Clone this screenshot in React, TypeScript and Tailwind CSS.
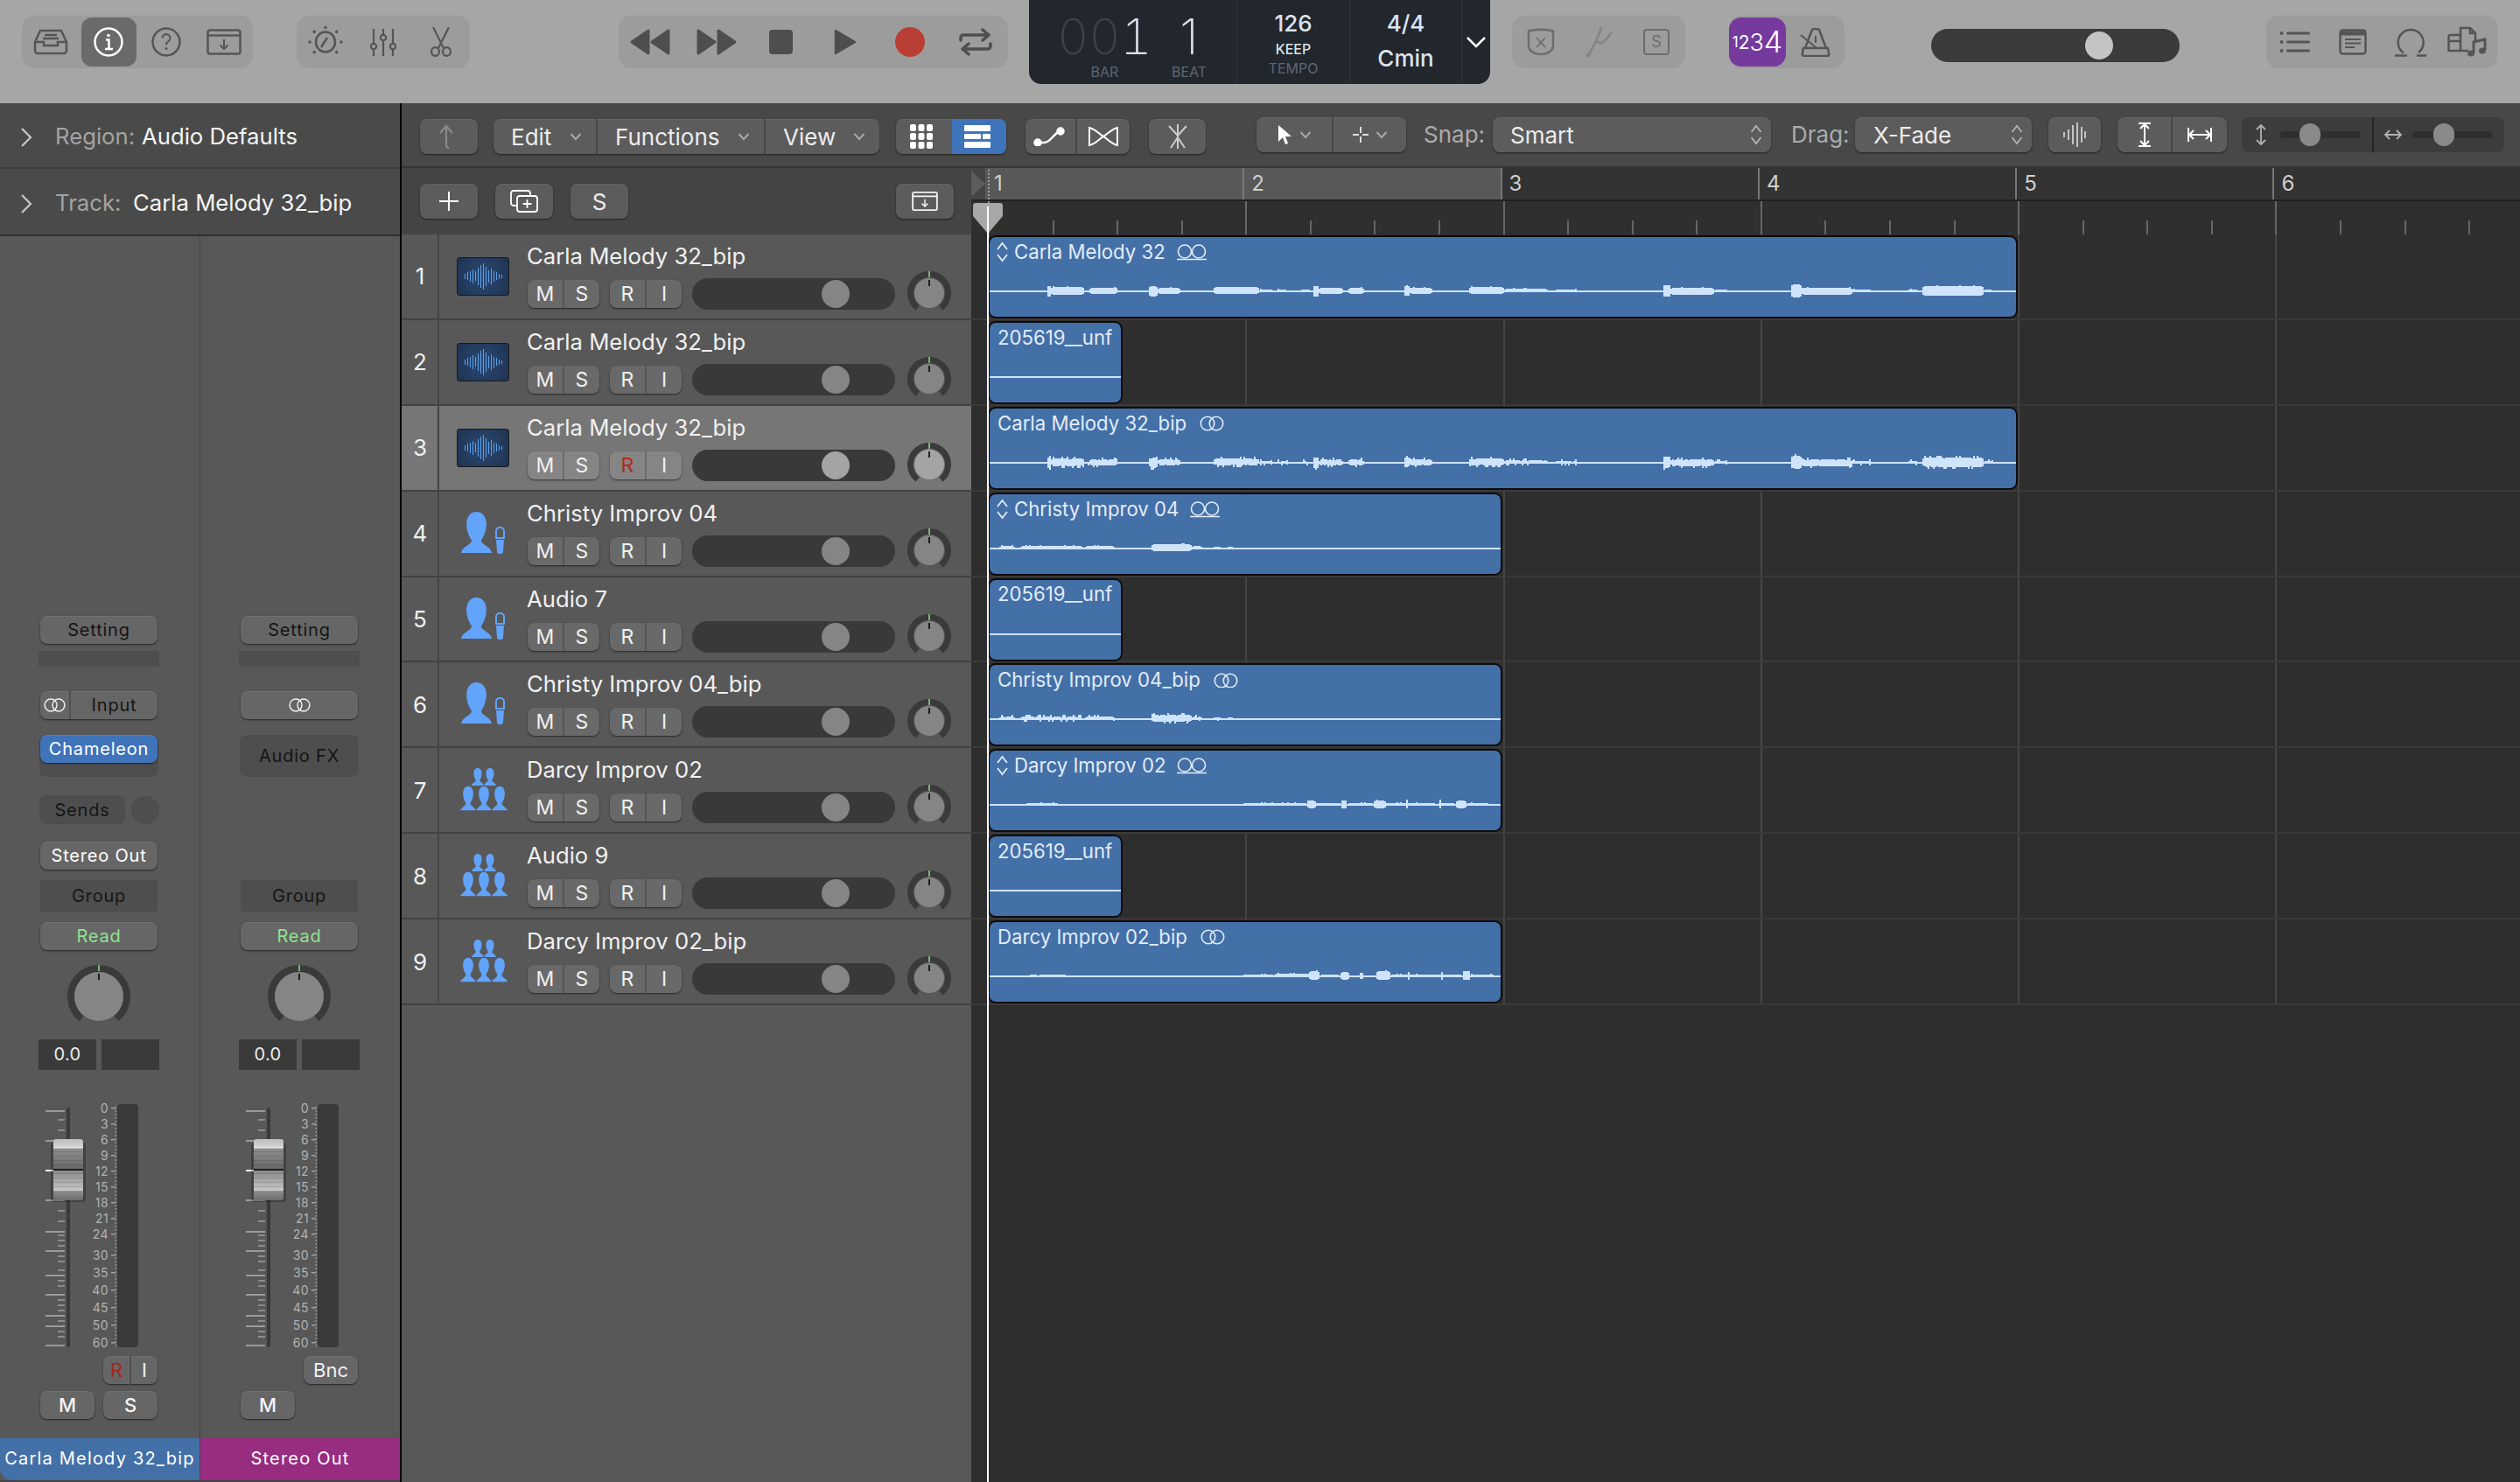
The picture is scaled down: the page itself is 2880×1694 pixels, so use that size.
import type { ReactNode } from 'react'

const btnBase =
  'flex items-center rounded-lg bg-[#5c5c5c] text-[#ececec] shadow-[0_1px_2px_rgba(0,0,0,0.55),inset_0_1px_0_rgba(255,255,255,0.06)]'
const btn = `${btnBase} justify-center`
const stripBase =
  'flex items-center justify-center rounded-lg shadow-[0_1px_2px_rgba(0,0,0,0.6),inset_0_1px_0_rgba(255,255,255,0.08)]'
const stripBtn = `${stripBase} bg-[#666666]`

const TOP = '#555555'
const BLUE = '#62a3fb'
const WAVE = '#cfe3fb'

function Cell({ w = 'w-[66px]', children }: { w?: string; children: ReactNode }) {
  return <div className={`flex h-full items-center justify-center ${w}`}>{children}</div>
}

function Group({ className, children }: { className: string; children: ReactNode }) {
  return <div className={`mt-[18px] flex h-[60px] rounded-[14px] bg-[#9c9c9c] ${className}`}>{children}</div>
}

function InboxIcon() {
  return (
    <svg width="40" height="30" viewBox="0 0 40 30" fill="none" stroke={TOP} strokeWidth="2.5">
      <path d="M2 15 8 2h24l6 13v10a3 3 0 0 1-3 3H5a3 3 0 0 1-3-3Z" />
      <path d="M2 15h10v4h16v-4h10M13 7h14M11 11h18" />
    </svg>
  )
}
function InfoIcon() {
  return (
    <svg width="36" height="36" viewBox="0 0 36 36" fill="none" stroke="#fff" strokeWidth="2.5">
      <circle cx="18" cy="18" r="15.5" />
      <circle cx="18" cy="10.5" r="1.8" fill="#fff" stroke="none" />
      <path d="M15 15.5h3.5V26M14 26h9" />
    </svg>
  )
}
function HelpIcon() {
  return (
    <svg width="36" height="36" viewBox="0 0 36 36" fill="none" stroke={TOP} strokeWidth="2.5">
      <circle cx="18" cy="18" r="15.5" />
      <path d="M13.5 13.5a4.5 4.5 0 1 1 6.8 3.9c-1.6 1-2.3 2-2.3 4" strokeWidth="2" />
      <circle cx="18" cy="25.5" r="1.5" fill={TOP} stroke="none" />
    </svg>
  )
}
function DownloadBox({ color = TOP, w = 40, h = 30 }: { color?: string; w?: number; h?: number }) {
  return (
    <svg width={w} height={h} viewBox="0 0 40 30" fill="none" stroke={color} strokeWidth="2.5">
      <rect x="1.5" y="1.5" width="37" height="27" rx="2.5" />
      <path d="M1.5 7.5h37" />
      <path d="M20 12v11M15.5 18.5 20 23l4.5-4.5" strokeWidth="2" />
    </svg>
  )
}
function DialIcon() {
  const dots = [0, 45, 90, 135, 225, 270, 315].map((a) => {
    const r = (a * Math.PI) / 180
    return { x: 20 + 18 * Math.sin(r), y: 19 - 16.5 * Math.cos(r) }
  })
  return (
    <svg width="40" height="38" viewBox="0 0 40 38" fill="none" stroke={TOP} strokeWidth="2.5">
      <ellipse cx="20" cy="19" rx="11" ry="11.5" />
      <path d="m15 25 7-11" />
      {dots.map((d, i) => (
        <circle key={i} cx={d.x} cy={d.y} r="1.8" fill={TOP} stroke="none" />
      ))}
    </svg>
  )
}
function SlidersIcon() {
  return (
    <svg width="30" height="32" viewBox="0 0 30 32" fill="none" stroke={TOP} strokeWidth="2.2">
      <path d="M4 1v31M15 1v31M26 1v31" />
      <circle cx="4" cy="21" r="3.2" fill="#9c9c9c" />
      <circle cx="15" cy="11" r="3.2" fill="#9c9c9c" />
      <circle cx="26" cy="21" r="3.2" fill="#9c9c9c" />
    </svg>
  )
}
function ScissorsIcon() {
  return (
    <svg width="26" height="34" viewBox="0 0 26 34" fill="none" stroke={TOP} strokeWidth="2.2">
      <path d="M4 0 16 24M22 0 10 24" />
      <ellipse cx="6.5" cy="28" rx="4.5" ry="4.8" />
      <ellipse cx="19.5" cy="28" rx="4.5" ry="4.8" />
    </svg>
  )
}
function RewIcon({ flip }: { flip?: boolean }) {
  return (
    <svg width="48" height="30" viewBox="0 0 48 30" className={flip ? '-scale-x-100' : ''} fill="#4e4e4e" stroke="#4e4e4e" strokeWidth="3" strokeLinejoin="round">
      <path d="M2 15 21 2v26ZM25 15 44 2v26Z" />
    </svg>
  )
}
function LoopIcon() {
  return (
    <svg width="38" height="32" viewBox="0 0 38 32" fill="none" stroke="#4e4e4e" strokeWidth="3.5" strokeLinecap="round" strokeLinejoin="round">
      <path d="M2 14v-3a3 3 0 0 1 3-3h28M27 2l7 6-7 6" />
      <path d="M36 18v3a3 3 0 0 1-3 3H5M11 18l-7 6 7 6" />
    </svg>
  )
}
function ShieldX() {
  return (
    <svg width="32" height="32" viewBox="0 0 32 32" fill="none" stroke="#6c6c6c" strokeWidth="2.5">
      <path d="M2 3.5c8-2.5 20-2.5 28 0V20c0 6-6 10-14 10S2 26 2 20Z" />
      <path d="m11 11 10 11M21 11 11 22" strokeWidth="1.8" />
    </svg>
  )
}
function ForkIcon() {
  return (
    <svg width="36" height="36" viewBox="0 0 36 36" fill="none" stroke="#858585" strokeWidth="2.8" strokeLinecap="round">
      <path d="M7 32 15 17M15 17l6-15M15 17c6 4 9 2 17-9" />
      <circle cx="6" cy="33" r="2.5" fill="#858585" stroke="none" />
    </svg>
  )
}
function BoxS() {
  return (
    <div className="flex h-[30px] w-[30px] items-center justify-center rounded-[4px] border-[2.5px] border-[#6c6c6c] text-[18px] leading-none text-[#6c6c6c]">
      S
    </div>
  )
}
function MetronomeIcon() {
  return (
    <svg width="36" height="34" viewBox="0 0 36 34" fill="none" stroke={TOP} strokeWidth="2.5" strokeLinejoin="round">
      <path d="M6 24 14 3c.5-1.5 7-1.5 8 0l8 21" />
      <path d="M4 24h28l1 6a2 2 0 0 1-2 3H5a2 2 0 0 1-2-3Z" />
      <path d="M1 9 19 24M18 10v8" strokeWidth="2" />
    </svg>
  )
}
function ListIcon() {
  return (
    <svg width="36" height="26" viewBox="0 0 36 26" fill={TOP}>
      <circle cx="2.5" cy="3" r="2" />
      <circle cx="2.5" cy="13" r="2" />
      <circle cx="2.5" cy="23" r="2" />
      <rect x="8" y="1.5" width="27" height="3" rx="1.5" />
      <rect x="8" y="11.5" width="27" height="3" rx="1.5" />
      <rect x="8" y="21.5" width="27" height="3" rx="1.5" />
    </svg>
  )
}
function NotesIcon() {
  return (
    <svg width="32" height="30" viewBox="0 0 32 30" fill="none" stroke={TOP} strokeWidth="2.5">
      <rect x="1.5" y="1.5" width="29" height="27" rx="3" />
      <path d="M2 5h28" strokeWidth="5" />
      <path d="M7 12h18M7 16.5h18M7 21h11" strokeWidth="2" />
    </svg>
  )
}
function LoopBrowserIcon() {
  return (
    <svg width="40" height="34" viewBox="0 0 40 34" fill="none" stroke={TOP} strokeWidth="2.5">
      <path d="M12 29.5A14.5 14.5 0 1 1 29 29" />
      <path d="M2 32.5h14M27 32.5h11" />
    </svg>
  )
}
function MediaIcon() {
  return (
    <svg width="48" height="36" viewBox="0 0 48 36" fill="none" stroke={TOP} strokeWidth="2.5">
      <path d="M1.5 28V12a2 2 0 0 1 2-2H15v18ZM1.5 17H15" />
      <path d="M15 14V2h11l6 6v8M26 2v6h6M15 28h9" />
      <path d="M30 30V18l13-3v12" strokeWidth="3" />
      <ellipse cx="27" cy="31" rx="4" ry="3.5" fill={TOP} stroke="none" />
      <ellipse cx="40" cy="28" rx="4" ry="3.5" fill={TOP} stroke="none" />
    </svg>
  )
}

function Lcd() {
  return (
    <div className="ml-[24px] flex h-[96px] w-[527px] rounded-b-[14px] bg-[#22262d] text-[#dbe3ee]">
      <div className="flex w-[238px] border-r border-[#30343c] pl-[36px]">
        <div className="flex w-[101px] flex-col items-center">
          <div className="mt-[8px] h-[68px] text-[56px] leading-[68px] font-extralight tabular-nums">
            <span className="text-[#3c424c]">00</span>1
          </div>
          <div className="text-[16px] leading-[12px] text-[#5e6672]">BAR</div>
        </div>
        <div className="ml-[22px] flex w-[48px] flex-col items-center">
          <div className="mt-[8px] h-[68px] text-[56px] leading-[68px] font-extralight">1</div>
          <div className="text-[16px] leading-[12px] text-[#5e6672]">BEAT</div>
        </div>
      </div>
      <div className="flex w-[129px] flex-col items-center border-r border-[#30343c]">
        <div className="mt-[12px] h-[30px] text-[26px] leading-[30px] font-medium">126</div>
        <div className="mt-[5px] h-[18px] text-[16px] leading-[18px] font-medium">KEEP</div>
        <div className="mt-[3px] text-[16px] leading-[20px] text-[#5e6672]">TEMPO</div>
      </div>
      <div className="flex w-[128px] flex-col items-center border-r border-[#30343c]">
        <div className="mt-[12px] h-[30px] text-[26px] leading-[30px] font-medium">4/4</div>
        <div className="mt-[10px] text-[26px] leading-[30px] font-medium">Cmin</div>
      </div>
      <div className="flex flex-1 items-center justify-center">
        <svg width="24" height="14" viewBox="0 0 24 14" fill="none" stroke="#fff" strokeWidth="2.5">
          <path d="m2 2 10 10L22 2" />
        </svg>
      </div>
    </div>
  )
}

function TopBar() {
  return (
    <div className="flex h-[118px] items-start bg-[#a6a6a6]">
      <Group className="ml-[25px]">
        <Cell><InboxIcon /></Cell>
        <Cell>
          <div className="flex h-[56px] w-[63px] items-center justify-center rounded-[12px] bg-[#6a6a6a]">
            <InfoIcon />
          </div>
        </Cell>
        <Cell><HelpIcon /></Cell>
        <Cell><DownloadBox /></Cell>
      </Group>
      <Group className="ml-[50px]">
        <Cell><DialIcon /></Cell>
        <Cell><SlidersIcon /></Cell>
        <Cell><ScissorsIcon /></Cell>
      </Group>
      <Group className="ml-[170px]">
        <Cell w="w-[74px]"><RewIcon /></Cell>
        <Cell w="w-[74px]"><RewIcon flip /></Cell>
        <Cell w="w-[74px]"><div className="h-[28px] w-[27px] rounded-[4px] bg-[#4e4e4e]" /></Cell>
        <Cell w="w-[74px]">
          <svg width="26" height="30" viewBox="0 0 26 30" fill="#4e4e4e" stroke="#4e4e4e" strokeWidth="2.5" strokeLinejoin="round">
            <path d="M2 2 24 15 2 28Z" />
          </svg>
        </Cell>
        <Cell w="w-[74px]"><div className="h-[34px] w-[34px] rounded-full bg-[#b93e33]" /></Cell>
        <Cell w="w-[75px]"><LoopIcon /></Cell>
      </Group>
      <Lcd />
      <Group className="ml-[25px]">
        <Cell><ShieldX /></Cell>
        <Cell><ForkIcon /></Cell>
        <Cell><BoxS /></Cell>
      </Group>
      <Group className="ml-[50px]">
        <div className="mt-[2px] flex h-[56px] w-[65px] items-center justify-center rounded-[14px] bg-[#763a9f] leading-none text-white">
          <span className="text-[17px]">1</span>
          <span className="text-[21px]">2</span>
          <span className="text-[27px] font-light">3</span>
          <span className="text-[34px] font-light">4</span>
        </div>
        <Cell w="w-[67px]"><MetronomeIcon /></Cell>
      </Group>
      <div className="mt-[33px] ml-[99px] flex h-[38px] w-[284px] items-center rounded-[19px] bg-[#3b3b3b] pl-[176px]">
        <div className="h-[32px] w-[32px] rounded-full bg-[#c4c4c4]" />
      </div>
      <Group className="ml-[99px]">
        <Cell><ListIcon /></Cell>
        <Cell><NotesIcon /></Cell>
        <Cell><LoopBrowserIcon /></Cell>
        <Cell><MediaIcon /></Cell>
      </Group>
    </div>
  )
}

function Chev({ color = '#a8a8a8' }: { color?: string }) {
  return (
    <svg width="14" height="10" viewBox="0 0 14 10" fill="none" stroke={color} strokeWidth="2">
      <path d="m1.5 2 5.5 6 5.5-6" />
    </svg>
  )
}
function UpDown({ color = '#b4b4b4', w = 14, h = 24 }: { color?: string; w?: number; h?: number }) {
  return (
    <svg width={w} height={h} viewBox="0 0 14 24" fill="none" stroke={color} strokeWidth="1.8">
      <path d="m1.5 9 5.5-7 5.5 7M1.5 15l5.5 7 5.5-7" />
    </svg>
  )
}
function Menu({ w, label, last }: { w: string; label: string; last?: boolean }) {
  return (
    <div className={`flex h-full items-center justify-between pr-[16px] pl-[20px] ${w} ${last ? '' : 'border-r-2 border-[#484848]'}`}>
      <span>{label}</span>
      <Chev />
    </div>
  )
}
function Divided({ left, right, lw, className }: { left: ReactNode; right: ReactNode; lw: string; className: string }) {
  return (
    <div className={`${btn} h-[40px] ${className}`}>
      <div className={`flex h-full items-center justify-center border-r-2 border-[#484848] ${lw}`}>{left}</div>
      <div className="flex h-full flex-1 items-center justify-center">{right}</div>
    </div>
  )
}
function SmallSlider({ pos, icon }: { pos: string; icon: ReactNode }) {
  return (
    <div className="flex h-full flex-1 items-center">
      <div className="flex w-[44px] justify-center">{icon}</div>
      <div className="flex h-[8px] w-[92px] items-center rounded-[4px] bg-[#2f2f2f]">
        <div className={`h-[26px] w-[24px] rounded-full bg-[#8a8a8a] ${pos}`} />
      </div>
    </div>
  )
}

function Toolbar() {
  const white = { fill: 'none', stroke: '#fff', strokeWidth: 2 }
  return (
    <div className="flex h-[74px] shrink-0 items-start border-b-2 border-[#363636] bg-[#484848] text-[26px] text-[#ececec]">
      <div className={`${btn} mt-[18px] ml-[21px] h-[40px] w-[66px]`}>
        <svg width="24" height="28" viewBox="0 0 24 28" fill="none" stroke="#8a8a8a" strokeWidth="2.2">
          <path d="M12 27c-2 0-3-1-3-3V3M2 10l7-8 7 8" />
        </svg>
      </div>
      <div className={`${btnBase} mt-[18px] ml-[18px] h-[40px] w-[441px]`}>
        <Menu w="w-[119px]" label="Edit" />
        <Menu w="w-[192px]" label="Functions" />
        <Menu w="w-[130px]" label="View" last />
      </div>
      <div className={`${btn} mt-[18px] ml-[19px] h-[40px] w-[126px] overflow-hidden`}>
        <div className="flex h-full w-[64px] items-center justify-center pr-[6px]">
          <svg width="26" height="28" viewBox="0 0 26 28" fill="#fff">
            {[0, 10, 20].flatMap((y) =>
              [0, 9.5, 19].map((x) => <rect key={`${x}-${y}`} x={x} y={y} width="7" height="8" rx="2" />),
            )}
          </svg>
        </div>
        <div className="flex h-full flex-1 items-center justify-center bg-[#3f74bb] pr-[4px]">
          <svg width="30" height="28" viewBox="0 0 30 28" fill="#fff">
            <rect x="0" y="1" width="30" height="7" rx="1" />
            <rect x="0" y="11" width="19" height="6" rx="1" />
            <rect x="21" y="11" width="9" height="6" rx="1" />
            <rect x="0" y="20" width="30" height="7" rx="1" />
          </svg>
        </div>
      </div>
      <Divided
        lw="w-[59px]"
        className="mt-[18px] ml-[22px] w-[119px]"
        left={
          <svg width="36" height="22" viewBox="0 0 36 22" {...white} strokeWidth="2.5" className="-translate-x-[2px]">
            <path d="M3 18 12 18C20 18 22 8 32 4" />
            <circle cx="5" cy="18" r="3.5" fill="#fff" />
            <circle cx="31" cy="5" r="3.5" fill="#fff" />
          </svg>
        }
        right={
          <svg width="36" height="24" viewBox="0 0 36 24" {...white}>
            <path d="M2 2v20C10 20 14 14 18 12 14 10 10 4 2 2ZM34 2v20C26 20 22 14 18 12 22 10 26 4 34 2Z" />
          </svg>
        }
      />
      <div className={`${btn} mt-[18px] ml-[22px] h-[40px] w-[65px]`}>
        <svg width="28" height="30" viewBox="0 0 28 30" fill="none" stroke="#ccc" strokeWidth="2">
          <path d="M14 1v28M14 14 4 3M14 14 24 3M14 16 6 28M14 16l8 12" />
        </svg>
      </div>
      <div className={`${btn} mt-[16px] ml-[58px] h-[40px] w-[171px]`}>
        <div className="flex h-full w-[88px] items-center justify-center gap-[8px] border-r-2 border-[#484848]">
          <svg width="18" height="24" viewBox="0 0 18 24" fill="#fff">
            <path d="M2 1v19l5-5 3 8 3-1-3-8h7Z" />
          </svg>
          <Chev />
        </div>
        <div className="flex h-full flex-1 items-center justify-center gap-[8px]">
          <svg width="18" height="18" viewBox="0 0 18 18" fill="none" stroke="#ddd" strokeWidth="2">
            <path d="M9 0v7M9 11v7M0 9h7M11 9h7" />
          </svg>
          <Chev />
        </div>
      </div>
      <div className="mt-[16px] ml-[20px] w-[79px] leading-[40px] text-[#ababab]">Snap:</div>
      <div className={`${btnBase} mt-[16px] h-[40px] w-[318px] justify-between pr-[10px] pl-[20px]`}>
        <span>Smart</span>
        <UpDown />
      </div>
      <div className="mt-[16px] ml-[23px] w-[73px] leading-[40px] text-[#ababab]">Drag:</div>
      <div className={`${btnBase} mt-[16px] h-[40px] w-[202px] justify-between pr-[10px] pl-[21px]`}>
        <span>X-Fade</span>
        <UpDown />
      </div>
      <div className={`${btn} mt-[16px] ml-[19px] h-[40px] w-[60px]`}>
        <svg width="28" height="28" viewBox="0 0 28 28" stroke="#e4e4e4" strokeWidth="1.5">
          <path d="M2 11v6M7 8v12M12 3v22M17 0v28M22 5v18M26 10v8" />
        </svg>
      </div>
      <Divided
        lw="w-[63px]"
        className="mt-[16px] ml-[19px] w-[125px]"
        left={
          <svg width="16" height="28" viewBox="0 0 16 28" {...white}>
            <path d="M1 1h14M1 27h14M8 2v24M3 7l5-5 5 5M3 21l5 5 5-5" />
          </svg>
        }
        right={
          <svg width="28" height="18" viewBox="0 0 28 18" {...white}>
            <path d="M1 1v16M27 1v16M2 9h24M7 4 2 9l5 5M21 4l5 5-5 5" />
          </svg>
        }
      />
      <div className="mt-[16px] ml-[17px] flex h-[40px] w-[300px] rounded-lg bg-[#3c3c3c]">
        <SmallSlider
          pos="ml-[22px]"
          icon={<svg width="14" height="26" viewBox="0 0 14 26" fill="none" stroke="#b0b0b0" strokeWidth="1.8"><path d="M7 2v22M2 7l5-5 5 5M2 19l5 5 5-5" /></svg>}
        />
        <div className="h-full w-[2px] bg-[#262626]" />
        <SmallSlider
          pos="ml-[24px]"
          icon={<svg width="22" height="14" viewBox="0 0 22 14" fill="none" stroke="#b0b0b0" strokeWidth="1.8"><path d="M2 7h18M7 2 2 7l5 5M15 2l5 5-5 5" /></svg>}
        />
      </div>
    </div>
  )
}

function Knob({ s, r, w, inner, fill, ring = '#3a3a3a' }: { s: number; r: number; w: number; inner: number; fill: string; ring?: string }) {
  const x = r * 0.616
  const y = r * 0.788
  return (
    <svg width={s} height={s} viewBox={`${-s / 2} ${-s / 2} ${s} ${s}`}>
      <path d={`M${-x} ${y}A${r} ${r} 0 1 1 ${x} ${y}`} fill="none" stroke={ring} strokeWidth={w} />
      <circle r={inner} fill={fill} />
      <path d={`M0 ${-r - w / 2}V${-inner - 1}`} stroke="#8fdc8f" strokeWidth="1.5" />
      <path d={`M0 ${-inner + 2}V${-inner + 9}`} stroke="#111" strokeWidth="1.8" />
    </svg>
  )
}

function Rings({ color = '#e2ecf8', w = 28 }: { color?: string; w?: number }) {
  return (
    <svg width={w} height={w * 0.64} viewBox="0 0 28 18" fill="none" stroke={color} strokeWidth="1.6">
      <circle cx="9" cy="9" r="7.8" />
      <circle cx="19" cy="9" r="7.8" />
    </svg>
  )
}
function Tape() {
  return (
    <svg width="34" height="20" viewBox="0 0 34 20" fill="none" stroke="#e2ecf8" strokeWidth="1.6">
      <circle cx="9" cy="9.5" r="7.5" />
      <circle cx="25" cy="9.5" r="7.5" />
      <path d="M0 18.5h34" />
    </svg>
  )
}

const BUST = 'M0 20c1-3.5 6-3.5 7-6-2-2-3.5-5-3.5-8 0-3.5 2.5-6 6.5-6s6.5 2.5 6.5 6c0 3-1.5 6-3.5 8 1 2.5 6 2.5 7 6Z'

function WaveIcon() {
  const bars = [6, 9, 12, 16, 11, 20, 26, 30, 22, 14, 18, 12, 9, 6, 4]
  return (
    <div className="flex h-[44px] w-[60px] items-center justify-center gap-[2px] rounded-[3px] border border-[#1a1a1a] bg-[radial-gradient(circle,#2c4a75,#1e3250)]">
      {bars.map((h, i) => (
        <div key={i} className="w-[1px] bg-[#5aa0ea]" style={{ height: h }} />
      ))}
    </div>
  )
}
function SoloIcon() {
  return (
    <svg width="52" height="50" viewBox="0 0 52 50" fill={BLUE}>
      <path d={BUST} transform="translate(1 0) scale(1.75 2.35)" />
      <path d="M41 22a4 4 0 0 1 4-4h1a4 4 0 0 1 4 4v8h-9Z" fill="none" stroke={BLUE} strokeWidth="2" />
      <path d="M41 32h9l-1 14c-.5 3-6.5 3-7 0Z" />
    </svg>
  )
}
function CrowdIcon() {
  return (
    <svg width="56" height="50" viewBox="0 0 56 50" fill={BLUE} className="translate-x-[1px]">
      <path d={BUST} transform="translate(14 0) scale(.7 1)" />
      <path d={BUST} transform="translate(28 0) scale(.7 1)" />
      {[0, 18, 36].map((x) => (
        <path key={x} d={BUST} transform={`translate(${x} 20) scale(1 1.45)`} stroke="#585858" strokeWidth="1.2" />
      ))}
    </svg>
  )
}

const TRACKS: { name: string; icon: 'wave' | 'solo' | 'crowd' }[] = [
  { name: 'Carla Melody 32_bip', icon: 'wave' },
  { name: 'Carla Melody 32_bip', icon: 'wave' },
  { name: 'Carla Melody 32_bip', icon: 'wave' },
  { name: 'Christy Improv 04', icon: 'solo' },
  { name: 'Audio 7', icon: 'solo' },
  { name: 'Christy Improv 04_bip', icon: 'solo' },
  { name: 'Darcy Improv 02', icon: 'crowd' },
  { name: 'Audio 9', icon: 'crowd' },
  { name: 'Darcy Improv 02_bip', icon: 'crowd' },
]

function TrackRow({ n, name, icon, sel }: { n: number; name: string; icon: string; sel: boolean }) {
  const b = `flex h-[32px] w-[82px] rounded-lg shadow-[0_1px_2px_rgba(0,0,0,0.55)] ${sel ? 'bg-[#858585]' : 'bg-[#696969]'} text-[23px] leading-[32px] text-[#f0f0f0]`
  const seg = `flex-1 text-center border-r-2 ${sel ? 'border-[#6c6c6c]' : 'border-[#555555]'}`
  return (
    <div className={`flex h-[97.9px] border-b-2 border-[#424242] ${sel ? 'bg-[#767676]' : 'bg-[#585858]'}`}>
      <div className="flex w-[43px] items-center justify-center border-r-2 border-[#444444] pl-[1px] text-[26px] text-[#f0f0f0]">{n}</div>
      <div className="flex w-[100px] items-center justify-center">
        {icon === 'wave' ? <WaveIcon /> : icon === 'solo' ? <SoloIcon /> : <CrowdIcon />}
      </div>
      <div className="pl-[1px]">
        <div className="-ml-[1px] h-[50px] text-[25.7px] leading-[50px] text-[#f0f0f0]">{name}</div>
        <div className="mt-[2px] flex h-[32px] items-center">
          <div className={b}>
            <div className={seg}>M</div>
            <div className="flex-1 text-center">S</div>
          </div>
          <div className={`${b} ml-[12px]`}>
            <div className={`${seg} ${sel ? 'text-[#b3281e]' : ''}`}>R</div>
            <div className="flex-1 text-center">I</div>
          </div>
          <div className="ml-[12px] flex h-[36px] w-[232px] items-center rounded-[18px] bg-[#393939] pl-[148px]">
            <div className={`h-[32px] w-[32px] rounded-full ${sel ? 'bg-[#a4a4a4]' : 'bg-[#858585]'}`} />
          </div>
          <div className="ml-[14px] -translate-y-[1px]">
            <Knob s={50} r={21.5} w={7} inner={17} fill={sel ? '#a4a4a4' : '#858585'} />
          </div>
        </div>
      </div>
    </div>
  )
}

function TrackList() {
  return (
    <div className="flex w-[651px] shrink-0 flex-col bg-[#585858]">
      <div className="flex h-[76px] shrink-0 items-center bg-[#444444] pl-[21px]">
        <div className={`${btn} h-[40px] w-[66px]`}>
          <svg width="22" height="22" viewBox="0 0 22 22" stroke="#fff" strokeWidth="2"><path d="M11 0v22M0 11h22" /></svg>
        </div>
        <div className={`${btn} ml-[20px] h-[40px] w-[66px]`}>
          <svg width="32" height="26" viewBox="0 0 32 26" fill="none" stroke="#fff" strokeWidth="1.8">
            <rect x="1" y="1" width="22" height="17" rx="3" />
            <rect x="8" y="7" width="23" height="18" rx="3" fill="#5c5c5c" />
            <path d="M19.5 11v10M14.5 16h10" />
          </svg>
        </div>
        <div className={`${btn} ml-[20px] h-[40px] w-[66px] text-[26px]`}>S</div>
        <div className={`${btn} ml-[306px] h-[40px] w-[66px]`}>
          <DownloadBox color="#f0f0f0" w={30} h={24} />
        </div>
      </div>
      {TRACKS.map((t, i) => (
        <TrackRow key={i} n={i + 1} name={t.name} icon={t.icon} sel={i === 2} />
      ))}
    </div>
  )
}

// wave blobs: absolute screen x from, to, up, down
type Blob = [number, number, number, number]
const MELODY: Blob[] = [
  [1196, 1200, 6, 6], [1200, 1238, 5, 4], [1238, 1244, 1, 1], [1244, 1275, 4, 3], [1312, 1322, 6, 6], [1322, 1348, 4, 3],
  [1386, 1437, 5, 3], [1437, 1452, 2, 1], [1457, 1470, 2, 1], [1484, 1497, 2, 1], [1500, 1506, 6, 6], [1506, 1533, 4, 3], [1540, 1558, 4, 3],
  [1604, 1610, 6, 5], [1610, 1636, 4, 3], [1678, 1718, 5, 3], [1718, 1767, 3, 1], [1775, 1803, 2, 1],
  [1900, 1908, 7, 6], [1908, 1957, 4, 4], [1957, 1973, 2, 1], [2046, 2058, 8, 7], [2058, 2115, 4, 4], [2115, 2139, 2, 1], [2178, 2192, 2, 1], [2196, 2265, 6, 5], [2265, 2277, 2, 1],
]
const CHRISTY: Blob[] = [
  [1141, 1159, 3, 0], [1165, 1237, 3, 1], [1239, 1272, 3, 1], [1315, 1361, 5, 3], [1361, 1373, 3, 0], [1386, 1394, 2, 0], [1402, 1408, 2, 0],
]
const DARCY: Blob[] = [
  [1172, 1209, 2, 0], [1418, 1493, 2, 1], [1493, 1503, 5, 4], [1503, 1532, 2, 1], [1532, 1538, 5, 4], [1538, 1569, 2, 1], [1569, 1583, 5, 4],
  [1583, 1641, 2, 1], [1606, 1607, 5, 4], [1644, 1645, 5, 4], [1641, 1663, 2, 1], [1663, 1674, 5, 4], [1674, 1702, 2, 1],
]
const DARCY_BIP: Blob[] = [
  [1176, 1183, 2, 0], [1187, 1217, 2, 0], [1418, 1453, 2, 1], [1455, 1495, 3, 1], [1495, 1507, 6, 4], [1507, 1531, 2, 1], [1531, 1540, 5, 4], [1553, 1557, 4, 3],
  [1572, 1587, 6, 4], [1587, 1671, 2, 1], [1608, 1609, 5, 4], [1646, 1647, 5, 4], [1671, 1678, 6, 4], [1678, 1708, 2, 1],
]

// cheap repeatable noise so the same wave always draws the same
const noise = (x: number) => {
  const s = Math.sin(x * 12.9898) * 43758.5453
  return s - Math.floor(s)
}

function Wave({ width, end, blobs = [], jag }: { width: number; end: number; blobs?: Blob[]; jag?: boolean }) {
  const bars: [number, number, number, number][] = []
  for (const [a, b, u, d] of blobs) {
    for (let x = a; x < b; x += 2) {
      const n = noise(x)
      const m = noise(x + 1)
      const edge = b - a > 8 && (x < a + 2 || x >= b - 2) ? 1 : 0
      const up = jag ? (n > 0.78 ? u + 2 : n < 0.14 ? u - 1 : u) : n > 0.9 ? u + 1 : u
      const down = jag ? (m > 0.82 ? d + 2 : m < 0.14 ? d - 1 : d) : d
      bars.push([x - 1130, 2, Math.max(up - edge, 1), Math.max(down - edge, 0)])
    }
  }
  return (
    <svg width={width} height="30" className="mt-[13px]" fill={WAVE}>
      <rect x="0" y="14" width={end - 1130} height="2" />
      {bars.map(([x, w, u, d], i) => (
        <rect key={i} x={x} y={15 - u} width={w} height={u + d} />
      ))}
    </svg>
  )
}

const REGIONS: { w: number; end: number; name: string; kind: 'comp' | 'stereo' | 'short'; blobs?: Blob[]; jag?: boolean }[] = [
  { w: 1177, end: 2304, name: 'Carla Melody 32', kind: 'comp', blobs: MELODY },
  { w: 154, end: 1280, name: '205619__unf', kind: 'short' },
  { w: 1177, end: 2304, name: 'Carla Melody 32_bip', kind: 'stereo', blobs: MELODY, jag: true },
  { w: 588, end: 1714, name: 'Christy Improv 04', kind: 'comp', blobs: CHRISTY },
  { w: 154, end: 1280, name: '205619__unf', kind: 'short' },
  { w: 588, end: 1714, name: 'Christy Improv 04_bip', kind: 'stereo', blobs: CHRISTY, jag: true },
  { w: 588, end: 1714, name: 'Darcy Improv 02', kind: 'comp', blobs: DARCY },
  { w: 154, end: 1280, name: '205619__unf', kind: 'short' },
  { w: 588, end: 1714, name: 'Darcy Improv 02_bip', kind: 'stereo', blobs: DARCY_BIP },
]

function Region({ r }: { r: (typeof REGIONS)[number] }) {
  return (
    <div className="ml-[19px] h-[95px] overflow-hidden rounded-[9px] border-2 border-[#0c0c0c] bg-[#4470a8]" style={{ width: r.w }}>
      <div className="flex h-[34px] items-center pl-[8px] text-[22.2px] leading-none whitespace-nowrap text-[#e2ecf8]">
        {r.kind === 'comp' && (
          <div className="mr-[6px] -ml-[1px]">
            <UpDown color="#e2ecf8" w={15} h={24} />
          </div>
        )}
        <span className={r.kind === 'comp' ? '' : 'ml-[1px]'}>{r.name}</span>
        {r.kind === 'comp' && <div className="ml-[13px]"><Tape /></div>}
        {r.kind === 'stereo' && <div className="ml-[15px]"><Rings /></div>}
      </div>
      <Wave width={r.w - 4} end={r.end} blobs={r.blobs} jag={r.jag} />
    </div>
  )
}

function Ruler() {
  return (
    <div className="h-[76px] shrink-0">
      <div className="flex h-[38px] border-b-2 border-[#222222] bg-[#333333]">
        <div className="flex w-[19px] items-center bg-[#444444]">
          <svg width="16" height="30" viewBox="0 0 16 30" fill="#5c5c5c"><path d="M0 0 16 15 0 30Z" /></svg>
        </div>
        {[1, 2, 3, 4, 5, 6].map((n) => (
          <div
            key={n}
            className={`w-[294.3px] shrink-0 border-l-2 pl-[8px] text-[24px] leading-[36px] text-[#cfcfcf] ${n < 3 ? 'bg-[#585858]' : ''} ${n === 1 ? 'border-[#585858]' : 'border-[#777777]'}`}
          >
            {n}
          </div>
        ))}
      </div>
      <div className="flex h-[38px] bg-[#2f2f2f] pl-[19px]">
        {[1, 2, 3, 4, 5, 6].map((n) => (
          <div key={n} className="flex w-[294.3px] shrink-0 items-end">
            <div className="h-full w-1/4 border-l-2 border-[#666666]" />
            <div className="h-[16px] w-1/4 border-l-2 border-[#666666]" />
            <div className="h-[16px] w-1/4 border-l-2 border-[#666666]" />
            <div className="h-[16px] w-1/4 border-l-2 border-[#666666]" />
          </div>
        ))}
      </div>
    </div>
  )
}

function Arrange() {
  return (
    <div className="relative flex-1 overflow-hidden bg-[#2e2e2e]">
      <Ruler />
      <div className="relative">
        <div className="absolute inset-0 flex pl-[19px]">
          {[1, 2, 3, 4, 5, 6].map((n) => (
            <div key={n} className="w-[294.3px] shrink-0 border-l-2 border-[#454545]" />
          ))}
        </div>
        {REGIONS.map((r, i) => (
          <div key={i} className="relative h-[97.9px] border-b-2 border-[#3a3a3a] pt-[1px]">
            <Region r={r} />
          </div>
        ))}
      </div>
      <div className="absolute top-[2px] left-[19px] h-[38px] w-[2px] border-l-2 border-dotted border-[#9a9a9a]" />
      <div className="absolute top-[40px] left-[2px]">
        <svg width="34" height="35" viewBox="0 0 34 35" fill="#a8a8a8"><path d="M3 0h28a3 3 0 0 1 3 3v12L17 35 0 15V3a3 3 0 0 1 3-3Z" /></svg>
      </div>
      <div className="absolute top-[44px] bottom-0 left-[18px] w-[2px] bg-white" />
    </div>
  )
}

const SCALE: [string, number][] = [
  ['0', 5], ['3', 23], ['6', 41], ['9', 59], ['12', 77], ['15', 95], ['18', 113], ['21', 131], ['24', 149],
  ['30', 173], ['35', 193], ['40', 213], ['45', 233], ['50', 253], ['60', 273],
]
const LONG = [7, 41, 109, 145, 167, 195, 217, 241, 253, 275]
const SHORT = [17, 29, 121, 133, 149, 155, 161, 173, 179, 189, 201, 207, 223, 229, 235, 247, 259, 265]

function Fader() {
  const dots = []
  for (let y = 3; y < 278; y += 4) dots.push(y)
  return (
    <svg width="228" height="290" className="mt-[33px]" style={{ fontFamily: 'Inter, sans-serif' }}>
      <defs>
        <linearGradient id="capgrad" x1="0" y1="0" x2="0" y2="1">
          <stop offset="0" stopColor="#bcbcbc" />
          <stop offset="0.13" stopColor="#d4d4d4" />
          <stop offset="0.14" stopColor="#f0f0f0" />
          <stop offset="0.16" stopColor="#8e8e8e" />
          <stop offset="0.48" stopColor="#6a6a6a" />
          <stop offset="0.49" stopColor="#1e1e1e" />
          <stop offset="0.51" stopColor="#1e1e1e" />
          <stop offset="0.52" stopColor="#8a8a8a" />
          <stop offset="0.84" stopColor="#c8c8c8" />
          <stop offset="0.86" stopColor="#8a8a8a" />
          <stop offset="1" stopColor="#6e6e6e" />
        </linearGradient>
        <pattern id="caplines" width="34" height="5" patternUnits="userSpaceOnUse">
          <rect y="4" width="34" height="1" fill="#000" opacity=".12" />
        </pattern>
      </defs>
      <g transform="translate(0 6)">
        <rect x="76" y="4" width="4" height="274" rx="2" fill="#3a3a3a" />
        {LONG.map((y) => <rect key={y} x="52" y={y} width="22" height="2" fill="#9b9b9b" />)}
        {SHORT.map((y) => <rect key={y} x="66" y={y} width="8" height="2" fill="#8c8c8c" />)}
        <rect x="52" y="75" width="9" height="2" fill="#fff" />
        <rect x="58" y="44" width="40" height="68" rx="4" fill="#000" opacity=".25" />
        <rect x="61" y="40" width="34" height="70" rx="3" fill="url(#capgrad)" />
        <rect x="61" y="52" width="34" height="50" fill="url(#caplines)" />
        {SCALE.map(([t, y]) => (
          <g key={t}>
            <text x="124" y={y + 5} textAnchor="end" fontSize="14" letterSpacing="0.4" fill="#b2b2b2">{t}</text>
            <rect x="127" y={y - 1} width="5" height="1.5" fill="#a0a0a0" />
          </g>
        ))}
        {dots.map((y) => <rect key={y} x="131.5" y={y} width="1.5" height="2" fill="#929292" />)}
        <rect x="134" y="0" width="24" height="278" rx="4" fill="#3a3a3a" />
      </g>
    </svg>
  )
}

function Strip({ out }: { out?: boolean }) {
  const t = 'text-[20px] tracking-[0.04em] text-[#151515]'
  const slot = 'bg-[#4e4e4e]'
  return (
    <div className="flex w-[228px] flex-col bg-[#585858]">
      <div className={`${stripBtn} mt-[434px] ml-[46px] h-[32px] w-[134px] ${t}`}>Setting</div>
      <div className={`mt-[8px] ml-[44px] h-[18px] w-[138px] ${slot}`} />
      <div className={`${stripBtn} mt-[28px] ml-[46px] h-[32px] w-[134px] ${t}`}>
        {out ? (
          <Rings w={25} color="#f0f0f0" />
        ) : (
          <>
            <div className="flex h-full w-[35px] items-center justify-center border-r-2 border-[#505050]">
              <Rings w={25} color="#f0f0f0" />
            </div>
            <div className="flex-1 text-center">Input</div>
          </>
        )}
      </div>
      {out ? (
        <div className={`mt-[18px] ml-[45px] flex h-[48px] w-[136px] items-center justify-center rounded-lg ${slot} ${t}`}>Audio FX</div>
      ) : (
        <div className={`mt-[18px] ml-[45px] h-[48px] w-[136px] rounded-lg ${slot}`}>
          <div className={`${stripBase} ml-[1px] h-[32px] w-[134px] bg-[#3f74bb] text-[20px] tracking-[0.04em] text-white`}>Chameleon</div>
        </div>
      )}
      {out ? (
        <div className="mt-[74px] h-[32px]" />
      ) : (
        <>
          <div className="mt-[21px] ml-[45px] flex h-[33px] items-center">
            <div className={`flex h-full w-[98px] items-center justify-center rounded-lg ${slot} ${t}`}>Sends</div>
            <div className={`ml-[7px] h-[32px] w-[32px] rounded-full ${slot}`} />
          </div>
          <div className={`${stripBtn} mt-[20px] ml-[46px] h-[32px] w-[134px] text-[20px] tracking-[0.04em] text-white`}>Stereo Out</div>
        </>
      )}
      <div className={`mt-[12px] ml-[46px] flex h-[36px] w-[134px] items-center justify-center ${slot} ${t}`}>Group</div>
      <div className={`${stripBtn} mt-[12px] ml-[46px] h-[32px] w-[134px] text-[20px] tracking-[0.04em] text-[#8ee38e]`}>Read</div>
      <div className="mt-[17px] ml-[77px] h-[72px]">
        <Knob s={72} r={32} w={8} inner={28} fill="#858585" />
      </div>
      <div className="mt-[13px] ml-[44px] flex h-[35px] w-[138px] justify-between">
        <div className="w-[66px] bg-[#3a3a3a] text-center text-[20px] leading-[35px] tracking-[0.02em] text-[#ededed]">0.0</div>
        <div className="w-[66px] bg-[#3a3a3a]" />
      </div>
      <Fader />
      <div className="mt-[4px] flex h-[32px] justify-end pr-[48px]">
        {out ? (
          <div className={`${stripBtn} h-full w-[62px] text-[22px] text-[#f0f0f0]`}>Bnc</div>
        ) : (
          <div className={`${stripBtn} h-full w-[62px] text-[22px] text-[#f0f0f0]`}>
            <div className="flex-1 border-r-2 border-[#505050] text-center text-[#a3281e]">R</div>
            <div className="flex-1 text-center">I</div>
          </div>
        )}
      </div>
      <div className="mt-[8px] flex h-[32px] gap-[10px] pl-[46px]">
        <div className={`${stripBtn} w-[62px] text-[22px] font-medium text-[#f4f4f4]`}>M</div>
        {!out && <div className={`${stripBtn} w-[62px] text-[22px] font-medium text-[#f4f4f4]`}>S</div>}
      </div>
      <div className={`mt-[22px] flex h-[48px] items-center justify-center pb-[2px] text-[20px] tracking-[0.06em] whitespace-nowrap text-white ${out ? 'bg-[#982c81]' : 'rounded-bl-[14px] bg-[#4470a8]'}`}>
        {out ? 'Stereo Out' : 'Carla Melody 32_bip'}
      </div>
    </div>
  )
}

function InfoRow({ label, value, lw, border }: { label: string; value: string; lw: string; border?: boolean }) {
  return (
    <div className={`flex h-[75px] items-center pt-[4px] pl-[23px] text-[25.7px] ${border ? 'border-b-2 border-[#3e3e3e]' : ''}`}>
      <svg width="14" height="22" viewBox="0 0 14 22" fill="none" stroke="#c8c8c8" strokeWidth="2.2" className="mr-[26px]">
        <path d="m2 1 10 10L2 21" />
      </svg>
      <span className={`text-[#a4a4a4] ${lw}`}>{label}</span>
      <span className="text-[#f4f4f4]">{value}</span>
    </div>
  )
}

export default function App() {
  return (
    <div className="flex h-[1694px] w-[2880px] flex-col overflow-hidden bg-[#a6a6a6] [font-family:Inter,'Liberation_Sans',sans-serif]">
      <TopBar />
      <div className="flex flex-1 overflow-hidden">
        <div className="flex w-[457px] shrink-0 flex-col bg-[#4a4a4a]">
          <InfoRow label="Region:" value="Audio Defaults" lw="w-[99px]" border />
          <InfoRow label="Track:" value="Carla Melody 32_bip" lw="w-[89px]" />
          <div className="flex flex-1 border-t-2 border-[#333333] bg-[#444444] pb-[2px]">
            <Strip />
            <div className="w-[2px] bg-[#444444]" />
            <Strip out />
          </div>
        </div>
        <div className="w-[2px] bg-black" />
        <div className="flex min-w-0 flex-1 flex-col">
          <Toolbar />
          <div className="flex flex-1 overflow-hidden">
            <TrackList />
            <Arrange />
          </div>
        </div>
      </div>
    </div>
  )
}
